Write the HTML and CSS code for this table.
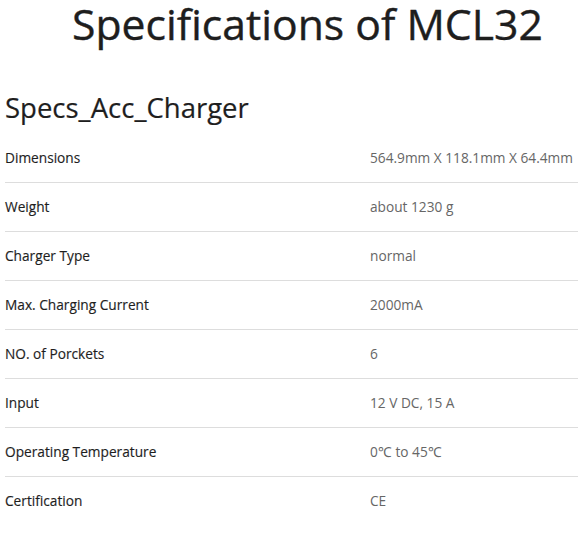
FILE: index.html
```html
<!DOCTYPE html>
<html>
<head>
<meta charset="utf-8">
<link rel="stylesheet" href="styles.css">
</head>
<body>
<div class="page">
  <h1 class="title">Specifications of MCL32</h1>
  <h2 class="subtitle">Specs_Acc_Charger</h2>
  <div class="specs">
    <div class="row"><div class="label">Dimensions</div><div class="value">564.9mm X 118.1mm X 64.4mm</div></div>
    <div class="row"><div class="label">Weight</div><div class="value">about 1230 g</div></div>
    <div class="row"><div class="label">Charger Type</div><div class="value">normal</div></div>
    <div class="row"><div class="label">Max. Charging Current</div><div class="value">2000mA</div></div>
    <div class="row"><div class="label">NO. of Porckets</div><div class="value">6</div></div>
    <div class="row"><div class="label">Input</div><div class="value">12 V DC, 15 A</div></div>
    <div class="row"><div class="label">Operating Temperature</div><div class="value">0℃ to 45℃</div></div>
    <div class="row last"><div class="label">Certification</div><div class="value">CE</div></div>
  </div>
</div>
</body>
</html>
```
FILE: styles.css
```css
html, body {
  margin: 0;
  padding: 0;
  background: #fff;
}
body {
  font-family: "Open Sans", sans-serif;
  color: #333;
}
.page {
  padding-left: 5px;
}
.title {
  margin: 0;
  padding-left: 67px;
  font-size: 42.7px;
  font-weight: 400;
  line-height: 48px;
  color: #1e1e1e;
  white-space: nowrap;
  -webkit-text-stroke: 0.4px #1e1e1e;
}
.subtitle {
  margin: 40px 0 0 0;
  font-size: 27.5px;
  font-weight: 400;
  line-height: 40px;
  color: #1e1e1e;
  -webkit-text-stroke: 0.2px #1e1e1e;
}
.specs {
  margin-top: 6px;
}
.row {
  display: grid;
  grid-template-columns: 365px 1fr;
  height: 46px;
  padding-bottom: 2px;
  align-items: center;
  border-bottom: 1px solid #ddd;
  font-size: 13.7px;
}
.row.last {
  border-bottom: none;
}
.label {
  color: #1e1e1e;
  -webkit-text-stroke: 0.15px #1e1e1e;
}
.value {
  color: #666;
  white-space: nowrap;
}
```
